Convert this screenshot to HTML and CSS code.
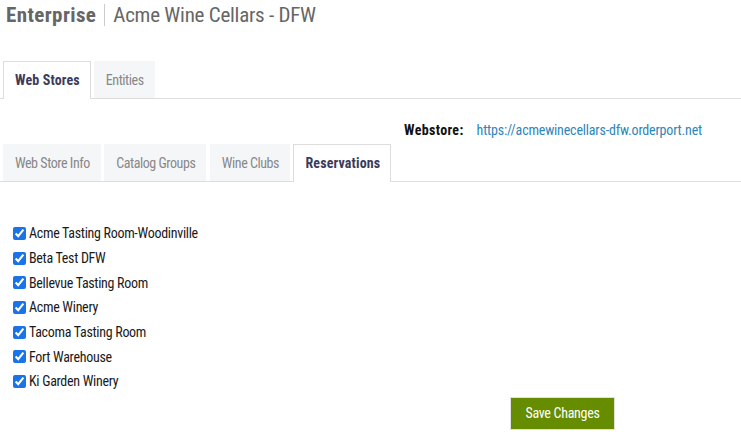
FILE: index.html
```html
<!DOCTYPE html>
<html>
<head>
<meta charset="utf-8">
<link rel="stylesheet" href="styles.css">
</head>
<body>
<div class="page">
  <h1 class="title"><span class="title-main">Enterprise</span><span class="title-sep"></span><span class="title-sub">Acme Wine Cellars - DFW</span></h1>
  <div class="tabs top-tabs">
    <div class="tab active">Web Stores</div>
    <div class="tab">Entities</div>
  </div>
  <div class="webstore"><span class="ws-label">Webstore:</span><a class="ws-link" href="#">https://acmewinecellars-dfw.orderport.net</a></div>
  <div class="tabs sub-tabs">
    <div class="tab">Web Store Info</div>
    <div class="tab">Catalog Groups</div>
    <div class="tab">Wine Clubs</div>
    <div class="tab active">Reservations</div>
  </div>
  <div class="list">
    <label class="item"><input type="checkbox" checked>Acme Tasting Room-Woodinville</label>
    <label class="item"><input type="checkbox" checked>Beta Test DFW</label>
    <label class="item"><input type="checkbox" checked>Bellevue Tasting Room</label>
    <label class="item"><input type="checkbox" checked>Acme Winery</label>
    <label class="item"><input type="checkbox" checked>Tacoma Tasting Room</label>
    <label class="item"><input type="checkbox" checked>Fort Warehouse</label>
    <label class="item"><input type="checkbox" checked>Ki Garden Winery</label>
  </div>
  <div class="actions"><button class="save">Save Changes</button></div>
</div>
</body>
</html>
```
FILE: styles.css
```css
html, body { margin: 0; padding: 0; background: #fff; }
body { font-family: "Roboto Condensed", "Liberation Sans Narrow", Roboto, sans-serif; font-size: 14px; color: #1a1a1a; letter-spacing: -0.3px; }
.page { width: 741px; }
.title { margin: 0; padding: 1px 0 0 6px; height: 28px; display: flex; align-items: center; font-size: 21px; font-weight: normal; color: #666; letter-spacing: 0; }
.title-main { font-weight: bold; letter-spacing: 0.4px; }
.title-sep { width: 1px; height: 22px; background: #ccc; margin: 0 8px 0 8px; }
.title-sub { color: #666; letter-spacing: -0.25px; }
.tabs { display: flex; border-bottom: 1px solid #ddd; padding-left: 3px; gap: 3px; }
.top-tabs { margin-top: 32px; }
.tab { height: 36px; line-height: 36px; padding: 0 10px 0 11px; background: #f5f6f8; color: #888; border: 1px solid transparent; border-bottom: none; margin-bottom: -1px; letter-spacing: -0.45px; }
.tab.active { background: #fff; border-color: #ddd; color: #3b3b5c; font-weight: bold; height: 37px; letter-spacing: 0.15px; }
.webstore { display: flex; justify-content: flex-end; padding: 23px 39px 0 0; height: 23px; gap: 13px; font-size: 14px; }
.ws-label { font-weight: bold; color: #111; letter-spacing: 0.35px; }
.ws-link { color: #2f86b8; text-decoration: none; letter-spacing: -0.18px; }
.sub-tabs { margin-top: -1px; }
.sub-tabs .tab { margin-right: 0.5px; }
.list { padding: 39px 0 0 12px; display: flex; flex-direction: column; }
.item { display: flex; align-items: center; height: 24.7px; font-size: 14px; }
.item input { margin: 0 3px 0 1px; width: 13px; height: 13px; accent-color: #1a73e8; }
.actions { display: flex; padding: 3px 0 0 510px; }
.save { width: 105px; height: 33px; background: #668c00; color: #fff; border: 1px solid #e0e0e0; font-family: inherit; font-size: 14px; letter-spacing: -0.3px; padding: 0; }
```
